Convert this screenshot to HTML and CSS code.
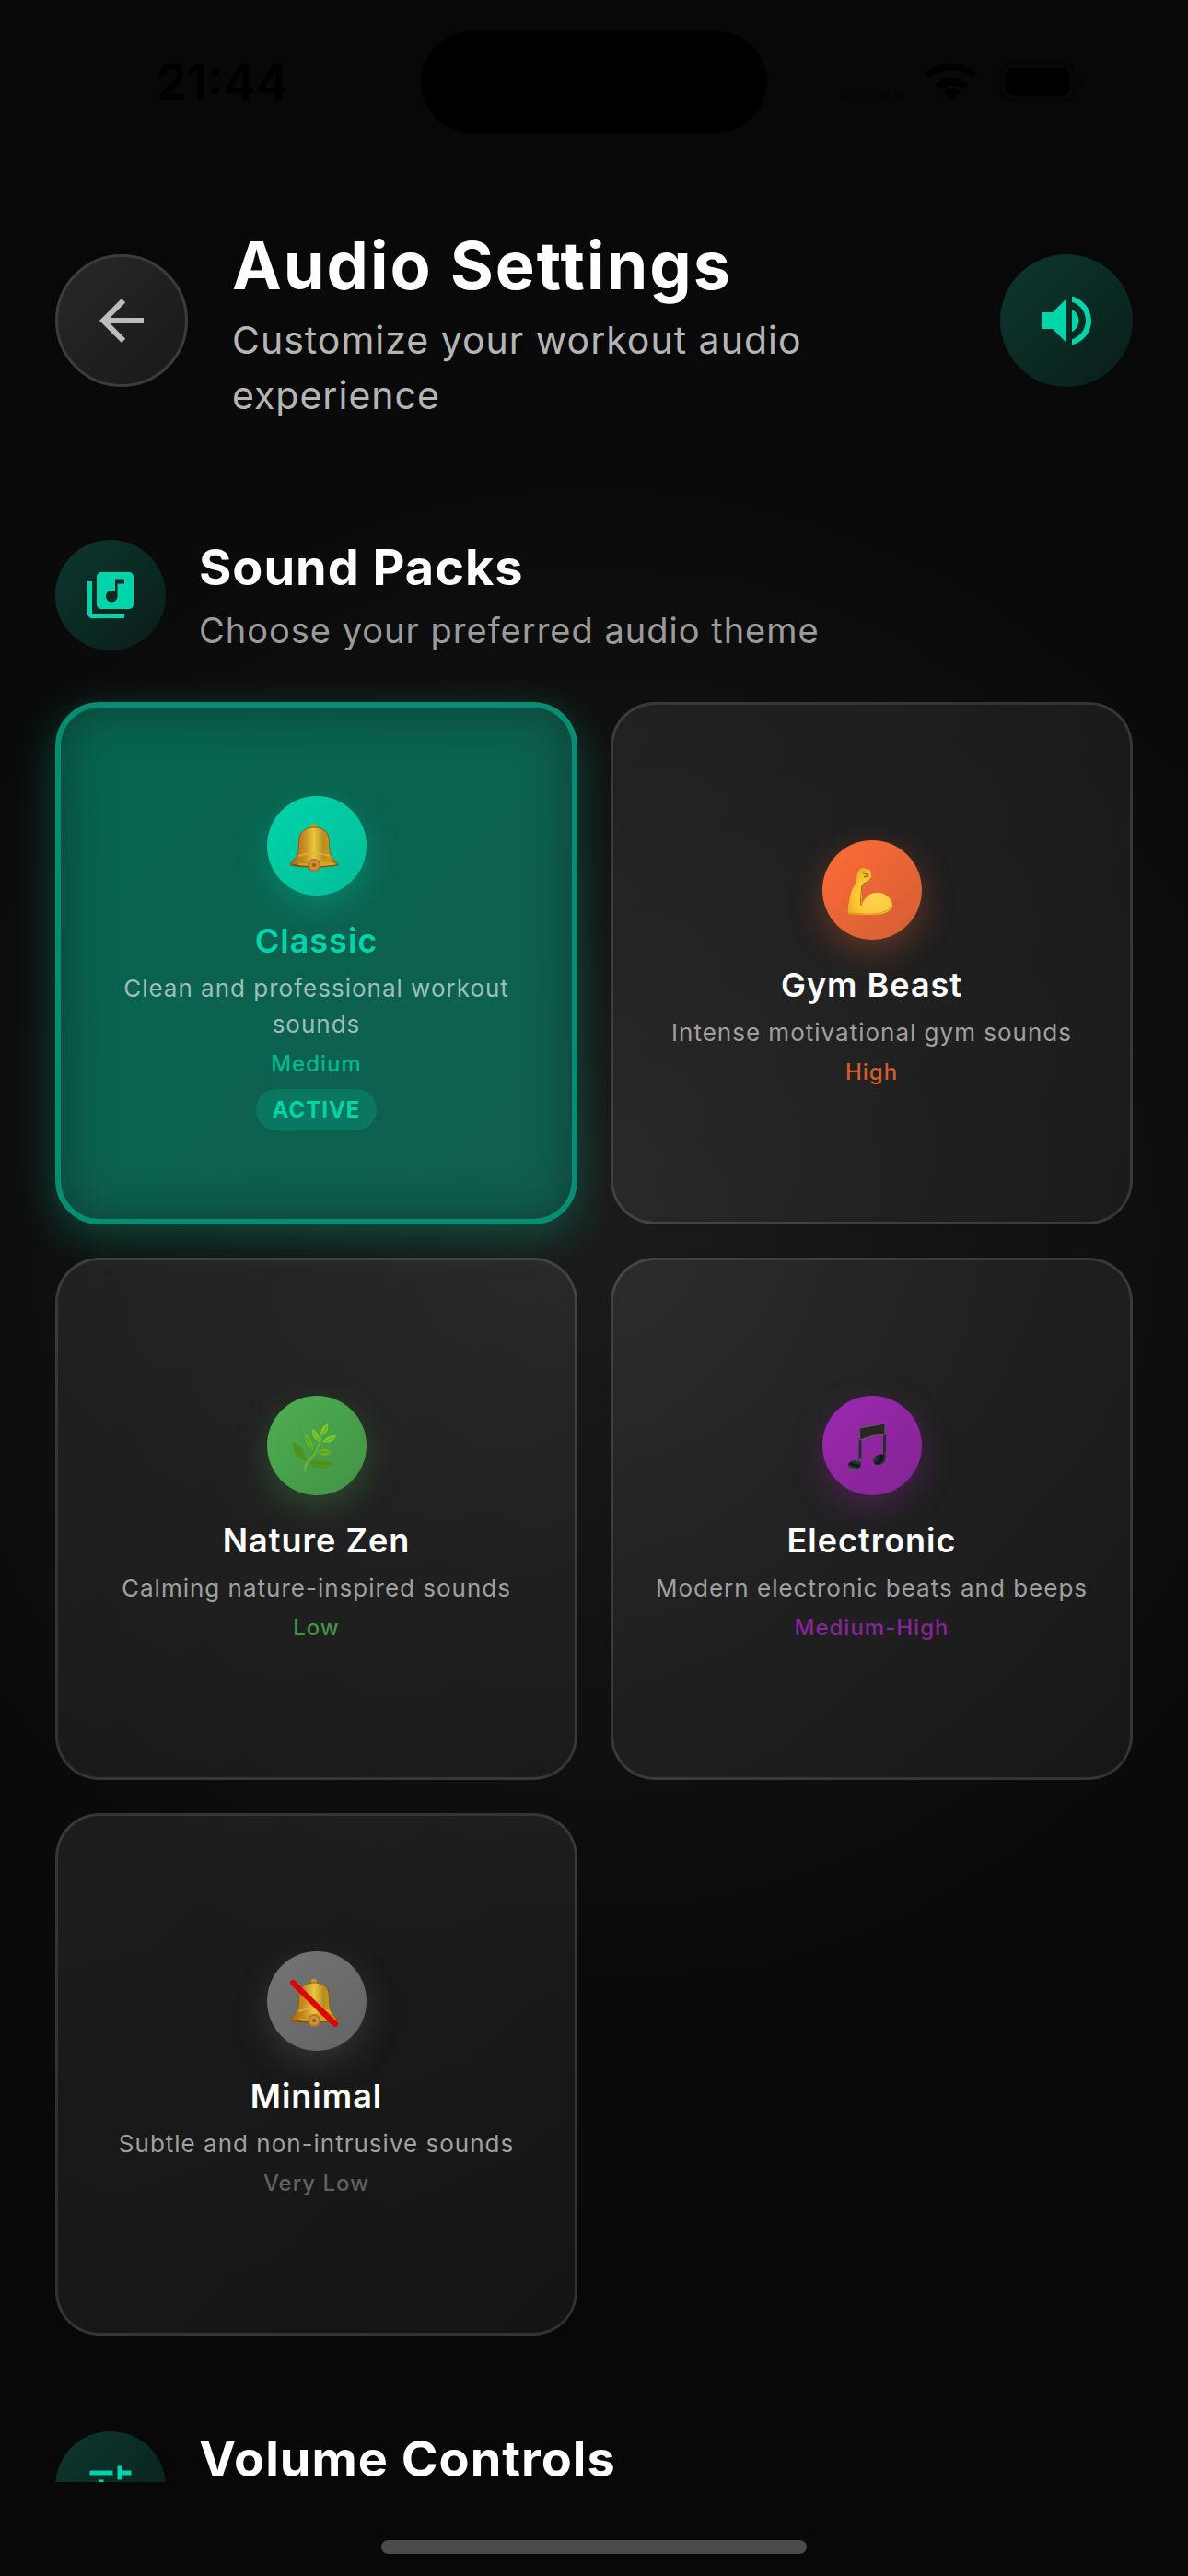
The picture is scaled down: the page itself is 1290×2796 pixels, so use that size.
FILE: index.html
```html
<!DOCTYPE html>
<html lang="en">
<head>
<meta charset="utf-8">
<meta name="viewport" content="width=device-width, initial-scale=1">
<title>Audio Settings</title>
<link rel="stylesheet" href="styles.css">
</head>
<body>
<div class="screen">
  <div class="status">
    <time class="status-time">21:44</time>
    <div class="island"></div>
    <svg class="status-icons" viewBox="0 0 262 44" aria-hidden="true">
      <g class="faint"><rect x="0" y="32" width="12" height="10" rx="3"/><rect x="18" y="32" width="12" height="10" rx="3"/><rect x="36" y="32" width="12" height="10" rx="3"/><rect x="54" y="32" width="12" height="10" rx="3"/></g>
      <path d="M117 42l-9-9.500a14 14 0 0 1 18 0zM99 24.500a26 26 0 0 1 36 0l-6 6a18 18 0 0 0-24 0zM93.500 18.500l-5-5.500a42 42 0 0 1 57 0l-5 5.500a34 34 0 0 0-47 0z"/>
      <rect class="battery-rim" x="171.500" y="1.500" width="79" height="41" rx="13"/>
      <rect x="176" y="7" width="70" height="30" rx="9"/>
      <path class="faint" d="M256 15q5 2 5 7t-5 7z"/>
    </svg>
  </div>

  <main class="content">
    <header class="page-head">
      <button class="round back" type="button" aria-label="Back">
        <svg class="icon-lg" viewBox="0 0 24 24"><path d="M20 11H7.830l5.590-5.590L12 4l-8 8 8 8 1.410-1.410L7.830 13H20v-2z"/></svg>
      </button>
      <div class="page-text">
        <h1>Audio Settings</h1>
        <p>Customize your workout audio experience</p>
      </div>
      <button class="round tinted" type="button" aria-label="Sound">
        <svg class="icon-lg" viewBox="0 0 24 24"><path d="M3 9v6h4l5 5V4L7 9H3zm13.500 3c0-1.770-1.020-3.290-2.500-4.030v8.050c1.480-.730 2.500-2.250 2.500-4.020zM14 3.230v2.060c2.890.860 5 3.540 5 6.710s-2.110 5.850-5 6.710v2.060c4.010-.910 7-4.490 7-8.770s-2.990-7.860-7-8.770z"/></svg>
      </button>
    </header>

    <section class="section">
      <div class="section-head">
        <div class="badge tinted">
          <svg class="icon-md" viewBox="0 0 24 24"><path d="M20 2H8c-1.100 0-2 .900-2 2v12c0 1.100.900 2 2 2h12c1.100 0 2-.900 2-2V4c0-1.100-.900-2-2-2zm-2 5h-3v5.500c0 1.380-1.120 2.500-2.500 2.500S10 13.880 10 12.500s1.120-2.500 2.500-2.500c.570 0 1.080.190 1.500.510V5h4v2zM4 6H2v14c0 1.100.900 2 2 2h14v-2H4V6z"/></svg>
        </div>
        <div class="section-text">
          <h2>Sound Packs</h2>
          <p>Choose your preferred audio theme</p>
        </div>
      </div>

      <div class="packs">
        <button class="pack active" type="button" aria-pressed="true">
          <span class="disc teal">
            <svg viewBox="0 0 108 108" aria-hidden="true">
              <defs>
                <linearGradient id="gold" x1="0" x2="1" y1="0" y2="0"><stop offset="0" stop-color="#a8660f"/><stop offset=".3" stop-color="#c98d22"/><stop offset=".5" stop-color="#e9c73f"/><stop offset=".7" stop-color="#b98c20"/><stop offset=".85" stop-color="#c99a22"/><stop offset="1" stop-color="#8a5b12"/></linearGradient>
                <radialGradient id="clapper"><stop offset="0" stop-color="#7a4510"/><stop offset=".5" stop-color="#d99a3c"/><stop offset="1" stop-color="#a8661c"/></radialGradient>
              </defs>
              <g id="bell">
                <rect x="48" y="30" width="6" height="7" rx="2" fill="#c6962b"/>
                <path d="M25 75c0-4 8-6 9-15 1-9 0-15 3-20 3-4 8-6 14-6s11 2 14 6c3 5 2 11 3 20 1 9 9 11 9 15-14 3-38 3-52 0z" fill="url(#gold)" stroke="#8a5a10"/>
                <path d="M26 75q25-7 51 0-25 4-51 0z" fill="#70420b"/>
                <path d="M54 76q14 0 22-2-8-3-22-3zM30 74q9-2 16-2v4q-9 0-16-2z" fill="#d8a51f"/>
                <path d="M34 65q17-6 34 0" fill="none" stroke="#e0b53c" stroke-width="2" opacity=".7"/>
                <circle cx="51" cy="75" r="7" fill="url(#clapper)"/>
              </g>
            </svg>
          </span>
          <span class="name">Classic</span>
          <span class="desc">Clean and professional workout sounds</span>
          <span class="level teal-text">Medium</span>
          <span class="pill">ACTIVE</span>
        </button>

        <button class="pack" type="button" aria-pressed="false">
          <span class="disc orange">
            <svg viewBox="0 0 108 108" aria-hidden="true">
              <defs><radialGradient id="skin" cx=".6" cy=".6" r=".7"><stop offset="0" stop-color="#ffd553"/><stop offset=".6" stop-color="#fcc838"/><stop offset="1" stop-color="#e8a91e"/></radialGradient></defs>
              <path d="M37 45q0-8 3-13 1-2 4-2l7 2q2 1 2 3v6q-1 3-10 8v12q0 5-1 10 3-8 9-12 6-3 12-2 10 2 13 12 1 7-8 10-9 2-21 2l-19-1q-1-3 1-14 2-12 6-17z" fill="url(#skin)"/>
              <path d="M28 79l20 1q13 0 21-3 6-2 8-6" fill="none" stroke="#c98710" opacity=".7"/>
              <path d="M43 49q-2 16-1 22M43 48q7-3 10-7M44 36l5 1-4 3 6-1" fill="none" stroke="#a86208" stroke-width="1"/>
            </svg>
          </span>
          <span class="name">Gym Beast</span>
          <span class="desc">Intense motivational gym sounds</span>
          <span class="level orange-text">High</span>
        </button>

        <button class="pack" type="button" aria-pressed="false">
          <span class="disc green">
            <svg viewBox="0 0 108 108" aria-hidden="true">
              <path d="M41 82q0-7 5-12 9-9 13-25" fill="none" stroke="#72b62c" stroke-width="2"/>
              <path d="M66 30q2 9-7 14-3-9 7-14zM75 43q-3 9-15 8 5-9 15-8zM49 36q8 3 8 14-9-3-8-14z" fill="#83c926"/>
              <path d="M41 41q10 7 9 19-10-6-9-19zM70 61q-7 8-15 0 8-7 15 0z" fill="#6fb224"/>
              <path d="M27 50q14 3 15 21-14-4-15-21zM71 74q-13 11-26-1 13-8 26 1z" fill="#4f9420"/>
              <path d="M60 43l5-10M61 51l11-6M50 39l6 10M42 45l7 13M57 61h11M29 53l12 16M48 73l19 1" fill="none" stroke="#3f8a1c" opacity=".6"/>
            </svg>
          </span>
          <span class="name">Nature Zen</span>
          <span class="desc">Calming nature-inspired sounds</span>
          <span class="level green-text">Low</span>
        </button>

        <button class="pack" type="button" aria-pressed="false">
          <span class="disc purple">
            <svg viewBox="0 0 108 108" aria-hidden="true">
              <defs><radialGradient id="bead" cx=".4" cy=".3" r=".7"><stop offset="0" stop-color="#b8c4c8"/><stop offset=".25" stop-color="#47545a"/><stop offset=".7" stop-color="#0e1214"/><stop offset="1" stop-color="#4a585e"/></radialGradient></defs>
              <path d="M41 46V70M67.500 41V64" fill="none" stroke="#2a2b31" stroke-width="3"/>
              <path d="M40 35l28-5v12q-14 0-27 6z" fill="#2d2426" stroke="#5c6468"/>
              <path d="M28 76q0-5 7-6 5 0 7-2v6q-1 7-8 7-6 0-6-5zM55 70q0-5 7-6 4 0 7-3v6q-1 8-8 8-6 0-6-5z" fill="url(#bead)"/>
            </svg>
          </span>
          <span class="name">Electronic</span>
          <span class="desc">Modern electronic beats and beeps</span>
          <span class="level purple-text">Medium-High</span>
        </button>

        <button class="pack" type="button" aria-pressed="false">
          <span class="disc grey">
            <svg viewBox="0 0 108 108" aria-hidden="true"><use href="#bell"/><path d="M28 34l46 45" stroke="#e00000" stroke-width="6" stroke-linecap="round"/></svg>
          </span>
          <span class="name">Minimal</span>
          <span class="desc">Subtle and non-intrusive sounds</span>
          <span class="level grey-text">Very Low</span>
        </button>
      </div>
    </section>

    <section class="section">
      <div class="section-head">
        <div class="badge tinted">
          <svg class="icon-md" viewBox="0 0 24 24"><path d="M3 17v2h6v-2H3zM3 5v2h10V5H3zm10 16v-2h8v-2h-8v-2h-2v6h2zM7 9v2H3v2h4v2h2V9H7zm14 4v-2H11v2h10zm-6-4h2V7h4V5h-4V3h-2v6z"/></svg>
        </div>
        <div class="section-text">
          <h2>Volume Controls</h2>
        </div>
      </div>
    </section>
  </main>

  <footer class="home-area"><div class="home-bar"></div></footer>
</div>
</body>
</html>
```
FILE: styles.css
```css
* { box-sizing: border-box; margin: 0; padding: 0; }

:root {
  --teal: #00d4aa;
}

body {
  background: #080808;
  color: #fff;
  font-family: Inter, "Liberation Sans", sans-serif;
}

button { font: inherit; color: inherit; border: 0; cursor: pointer; }

.screen {
  height: 100vh;
  display: flex;
  flex-direction: column;
  background: radial-gradient(circle at 50% 48%, #1b1b1b 0, #121212 420px, #0a0a0a 840px, #080808 1200px);
}

/* Status bar */
.status {
  flex: none;
  display: grid;
  grid-template-columns: 1fr 376px 1fr;
  align-items: center;
  padding: 34px 0 33px;
  color: #000;
}
.status-time { padding-left: 170px; font-size: 53px; font-weight: 600; line-height: 60px; }
.island { height: 110px; border-radius: 55px; background: #000; }
.status-icons { width: 262px; height: 44px; margin-left: 83px; fill: #000; }
.status-icons .faint { fill: #060606; }
.status-icons .battery-rim { fill: none; stroke: #050505; stroke-width: 3; }

/* Scrolling content */
.content { flex: 1; min-height: 0; overflow: hidden; padding: 60px 60px 0; }

.page-head { display: flex; align-items: center; gap: 48px; }
.page-text { flex: 1; }
.page-text h1 { font-size: 72px; line-height: 102px; font-weight: 700; letter-spacing: 2px; }
.page-text p { font-size: 41px; line-height: 60px; color: #b5b5b5; letter-spacing: 1px; }

.round, .badge { flex: none; display: grid; place-items: center; border-radius: 50%; }
.round { width: 144px; height: 144px; }
.back { background: linear-gradient(135deg, #282828, #191919); border: 3px solid #3c3c3c; color: #bdbdbd; }
.tinted { background: linear-gradient(135deg, #0b382f, #0a1d19); color: var(--teal); }
.badge { width: 120px; height: 120px; }
.icon-lg { width: 72px; height: 72px; fill: currentColor; }
.icon-md { width: 60px; height: 60px; fill: currentColor; }

.section { padding-top: 96px; }
.page-head + .section { padding-top: 119px; }
.section-head { display: flex; align-items: center; gap: 36px; margin-bottom: 48px; }
.section-text { min-height: 136px; }
.section-text h2 { font-size: 54px; line-height: 76px; font-weight: 700; letter-spacing: 1px; }
.section-text p { font-size: 38px; line-height: 60px; color: #9b9b9b; letter-spacing: 1px; }

/* Sound packs */
.packs { display: grid; grid-template-columns: 1fr 1fr; gap: 36px; }
.pack {
  aspect-ratio: 1;
  display: flex;
  flex-direction: column;
  align-items: center;
  justify-content: center;
  padding: 0 36px;
  border: 3px solid rgba(255, 255, 255, .12);
  border-radius: 48px;
  background: linear-gradient(135deg, rgba(255, 255, 255, .08), rgba(255, 255, 255, .05));
}
.pack.active {
  border: 6px solid #078e72;
  background: linear-gradient(135deg, #06644f, #105f4f);
  box-shadow: 0 12px 48px rgba(0, 212, 170, .3), inset 0 0 48px rgba(20, 30, 28, .5);
}
.disc { width: 108px; height: 108px; border-radius: 50%; margin-bottom: 24px; }
.disc svg { display: block; width: 108px; height: 108px; }
.teal { background: linear-gradient(135deg, #00d4aa, #05bd98); box-shadow: 0 12px 36px rgba(0, 212, 170, .3); }
.orange { background: linear-gradient(135deg, #ff6b35, #d35f35); box-shadow: 0 12px 36px rgba(255, 107, 53, .3); }
.green { background: linear-gradient(135deg, #4caf50, #439246); box-shadow: 0 12px 36px rgba(76, 175, 80, .3); }
.purple { background: linear-gradient(135deg, #9c27b0, #822691); box-shadow: 0 12px 36px rgba(156, 39, 176, .3); }
.grey { background: linear-gradient(135deg, #757575, #636363); box-shadow: 0 12px 36px rgba(117, 117, 117, .3); }

.name { font-size: 36px; line-height: 51px; font-weight: 600; letter-spacing: 1px; margin-bottom: 6px; }
.desc { font-size: 26px; line-height: 39px; color: #a0a0a0; letter-spacing: 1px; margin-bottom: 9px; }
.level { font-size: 24px; line-height: 30px; font-weight: 500; letter-spacing: 1px; }
.active .name { color: var(--teal); }
.active .desc { color: #9dbfb7; }
.teal-text { color: #04b893; }
.orange-text { color: #d65c30; }
.green-text { color: #439546; }
.purple-text { color: #862597; }
.grey-text { color: #606060; }
.pill {
  margin-top: 12px;
  padding: 9px 18px;
  border-radius: 23px;
  background: #0a7860;
  color: var(--teal);
  font-size: 24px;
  line-height: 27px;
  font-weight: 700;
  letter-spacing: 1px;
}

/* Home indicator */
.home-area { flex: none; display: flex; justify-content: center; padding: 63px 0 24px; }
.home-bar { width: 462px; height: 15px; border-radius: 8px; background: #4b4b4b; }
```
